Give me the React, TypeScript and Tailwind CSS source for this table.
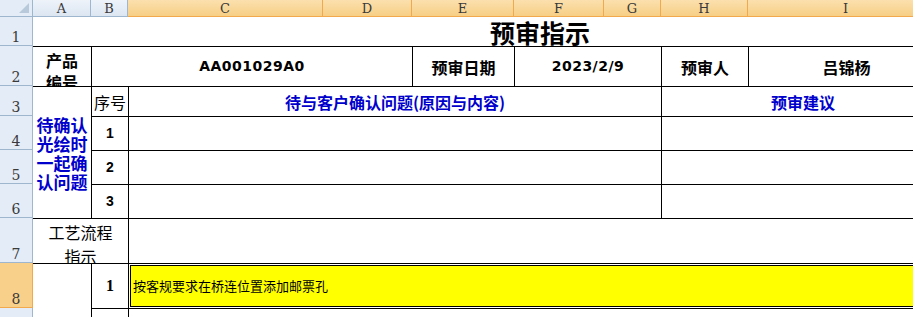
import clsx from "clsx";

const columns = ["A", "B", "C", "D", "E", "F", "G", "H", "I"];
const rowNumbers = [1, 2, 3, 4, 5, 6, 7, 8, 9];
// columns C..I hold the current selection, row 8 as well
const selectedCols = ["C", "D", "E", "F", "G", "H", "I"];
const selectedRow = 8;

const cjk = "font-['Noto_Sans_CJK_SC',sans-serif]";
const latin = "font-['DejaVu_Sans',sans-serif]";
const line = "border-black";

const rowStart: Record<number, string> = {
  1: "row-start-2",
  2: "row-start-3",
  3: "row-start-4",
  4: "row-start-5",
  5: "row-start-6",
  6: "row-start-7",
  7: "row-start-8",
  8: "row-start-9",
  9: "row-start-10",
};

const colStart: Record<string, string> = {
  A: "col-start-2",
  B: "col-start-3",
  C: "col-start-4",
  D: "col-start-5",
  E: "col-start-6",
  F: "col-start-7",
  G: "col-start-8",
  H: "col-start-9",
  I: "col-start-10",
};

const IssueRow = ({ n }: { n: number }) => (
  <>
    <div
      className={clsx(
        rowStart[n + 3],
        "col-start-3 flex items-center justify-center border-t border-l font-['Liberation_Sans',sans-serif] text-[14px] font-bold",
        line
      )}
    >
      {n}
    </div>
    <div className={clsx(rowStart[n + 3], "col-start-4 col-span-5 border-t border-l", line)} />
    <div className={clsx(rowStart[n + 3], "col-start-9 col-span-2 border-t border-l", line)} />
  </>
);

export default function App() {
  return (
    <div className="h-[317px] w-[913px] overflow-hidden bg-white">
      <div className="grid grid-cols-[33px_58px_37px_195px_89px_102px_90px_57px_87px_196px] grid-rows-[17px_29px_40px_30px_34px_34px_34px_45px_45px_30px] text-black">
        {/* corner */}
        <div className="relative col-start-1 row-start-1 border-r border-b border-[#9eb6ce] bg-[#e4ecf7]">
          <svg className="absolute right-[3px] bottom-[3px]" width="10" height="10" viewBox="0 0 10 10">
            <polygon points="10,0 10,10 0,10" fill="#b8c9dc" />
          </svg>
        </div>

        {/* column headers */}
        {columns.map((c) => {
          const sel = selectedCols.includes(c);
          return (
            <div
              key={c}
              className={clsx(
                colStart[c],
                "row-start-1 flex items-center justify-center border-r border-b font-['DejaVu_Serif',serif] text-[13px] leading-none text-[#3a3a3a]",
                sel
                  ? "border-[#f2a84c] bg-linear-to-b from-[#fbe0ae] to-[#f7cf85]"
                  : "border-[#9eb6ce] bg-linear-to-b from-[#eef3fa] to-[#dce6f2]"
              )}
            >
              {c}
            </div>
          );
        })}

        {/* row headers */}
        {rowNumbers.map((r) => (
          <div
            key={r}
            className={clsx(
              rowStart[r],
              "col-start-1 flex items-end justify-center border-r border-b font-['DejaVu_Serif',serif] text-[14px] leading-none text-[#3a3a3a]",
              r === selectedRow
                ? "border-[#f2a84c] bg-[#f9d08a]"
                : "border-[#9eb6ce] bg-[#e4ecf7]"
            )}
          >
            <span className="pb-[1px]">{r}</span>
          </div>
        ))}

        {/* row 1: title */}
        <div className={clsx("row-start-2 col-start-4 col-span-7 flex items-center justify-center pt-[3px] pl-[8px] text-[25px] font-bold", cjk)}>
          预审指示
        </div>

        {/* row 2 */}
        <div className={clsx("row-start-3 col-start-2 overflow-hidden border-t pt-[2px] text-center text-[16px] leading-[22px] font-bold", cjk, line)}>
          产品
          <br />
          编号
        </div>
        <div className={clsx("row-start-3 col-start-3 col-span-3 flex items-center justify-center border-t border-l text-[14px] font-bold tracking-[0.5px]", latin, line)}>
          AA001029A0
        </div>
        <div className={clsx("row-start-3 col-start-6 flex items-center justify-center border-t border-l text-[16px] font-bold", cjk, line)}>
          预审日期
        </div>
        <div className={clsx("row-start-3 col-start-7 col-span-2 flex items-center justify-center border-t border-l text-[14px] font-bold tracking-[0.5px]", latin, line)}>
          2023/2/9
        </div>
        <div className={clsx("row-start-3 col-start-9 flex items-center justify-center border-t border-l text-[16px] font-bold", cjk, line)}>
          预审人
        </div>
        <div className={clsx("row-start-3 col-start-10 flex items-center justify-center border-t border-l text-[16px] font-bold", cjk, line)}>
          吕锦杨
        </div>

        {/* rows 3-6: issues to confirm */}
        <div className={clsx("row-start-4 row-span-4 col-start-2 flex items-center justify-center border-t text-[17px] leading-[19px] font-bold text-[#0000cc]", cjk, line)}>
          <div className="text-center">
            待确认
            <br />
            光绘时
            <br />
            一起确
            <br />
            认问题
          </div>
        </div>
        <div className={clsx("row-start-4 col-start-3 flex items-center justify-center border-t border-l text-[16px]", cjk, line)}>
          序号
        </div>
        <div className={clsx("row-start-4 col-start-4 col-span-5 flex items-center justify-center border-t border-l text-[16px] font-bold text-[#0000cc]", cjk, line)}>
          待与客户确认问题(原因与内容)
        </div>
        <div className={clsx("row-start-4 col-start-9 col-span-2 flex items-center justify-center border-t border-l text-[16px] font-bold text-[#0000cc]", cjk, line)}>
          预审建议
        </div>
        {[1, 2, 3].map((n) => (
          <IssueRow key={n} n={n} />
        ))}

        {/* row 7: process */}
        <div className={clsx("row-start-8 col-start-2 col-span-2 overflow-hidden border-t pt-[1px] text-center text-[16px] leading-[24px]", cjk, line)}>
          工艺流程
          <br />
          指示
        </div>
        <div className={clsx("row-start-8 col-start-4 col-span-7 border-t border-l", line)} />

        {/* row 8 */}
        <div className={clsx("row-start-9 col-start-2 border-t", line)} />
        <div className={clsx("row-start-9 col-start-3 flex items-center justify-center border-t border-l font-['Liberation_Serif',serif] text-[16px] font-bold", line)}>
          1
        </div>
        <div className={clsx("row-start-9 col-start-4 col-span-7 border-t border-l bg-white p-[1px]", line)}>
          <div className={clsx("flex h-full items-center border border-black bg-[#ffff00] pl-[2px] text-[13px]", cjk)}>
            按客规要求在桥连位置添加邮票孔
          </div>
        </div>

        {/* row 9 */}
        <div className={clsx("row-start-10 col-start-3 border-t border-l", line)} />
        <div className={clsx("row-start-10 col-start-4 col-span-7 border-t border-l", line)} />
      </div>
    </div>
  );
}
